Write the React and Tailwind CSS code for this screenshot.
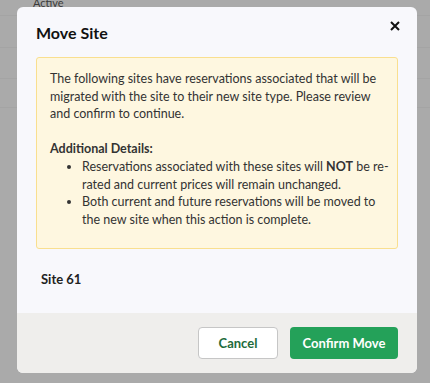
export default function App() {
    return (
        <div className="relative h-[383px] w-[430px] overflow-hidden bg-[#aaaaaa]" style={{ fontFamily: "Lato, sans-serif" }}>
            {/* Background page, dimmed */}
            <div className="flex flex-col">
                <div className="h-[16px] border-b border-[#a4a4a4] pl-[33px] text-[11px] leading-[6px] text-[#3a3a3a]">Active</div>
                <div className="h-[32px] border-b border-[#a4a4a4]" />
                <div className="h-[31px] border-b border-[#a4a4a4]" />
                <div className="h-[29px] border-b border-[#a4a4a4]" />
            </div>

            {/* Modal */}
            <div className="absolute left-[17px] top-[7px] flex w-[400px] flex-col overflow-hidden rounded-[6px] bg-[#f8f8fc]">
                <div className="relative px-[19px] pt-[16px]">
                    <h2 className="text-[16px] font-bold leading-[20px] text-[#111]">Move Site</h2>
                    <button className="absolute right-[16px] top-[13px] text-[#111]">
                        <svg className="h-[12px] w-[12px]" viewBox="0 0 12 12" fill="none" stroke="currentColor" strokeWidth={2}>
                            <path d="M2 2l8 8M10 2l-8 8" />
                        </svg>
                    </button>

                    <div className="mt-[14px] rounded-[3px] border border-[#f9df8f] bg-[#fef7e0] pl-[13px] pr-[4px] pt-[12px] pb-[20px] text-[12.5px] leading-[17.6px] text-[#333]">
                        <p className="pr-[6px]">The following sites have reservations associated that will be migrated with the site to their new site type. Please review and confirm to continue.</p>
                        <p className="mt-[17.6px] font-bold">Additional Details:</p>
                        <ul className="list-disc pl-[32px]">
                            <li>Reservations associated with these sites will <span className="font-bold">NOT</span> be re-rated and current prices will remain unchanged.</li>
                            <li className="pr-[6px]">Both current and future reservations will be moved to the new site when this action is complete.</li>
                        </ul>
                    </div>

                    <div className="px-[5px] pt-[21px] pb-[25px] text-[13px] font-bold leading-[18px] text-[#222]">Site 61</div>
                </div>

                <div className="flex h-[60px] items-center justify-end gap-[12px] bg-[#efeeec] pr-[19px]">
                    <button className="h-[32px] w-[80px] rounded-[4px] border border-[#c6c6c6] bg-white text-[13px] font-bold text-[#1e6b3c]">Cancel</button>
                    <button className="h-[32px] w-[108px] rounded-[4px] bg-[#24a159] text-[13px] font-bold text-white">Confirm Move</button>
                </div>
            </div>
        </div>
    );
}
